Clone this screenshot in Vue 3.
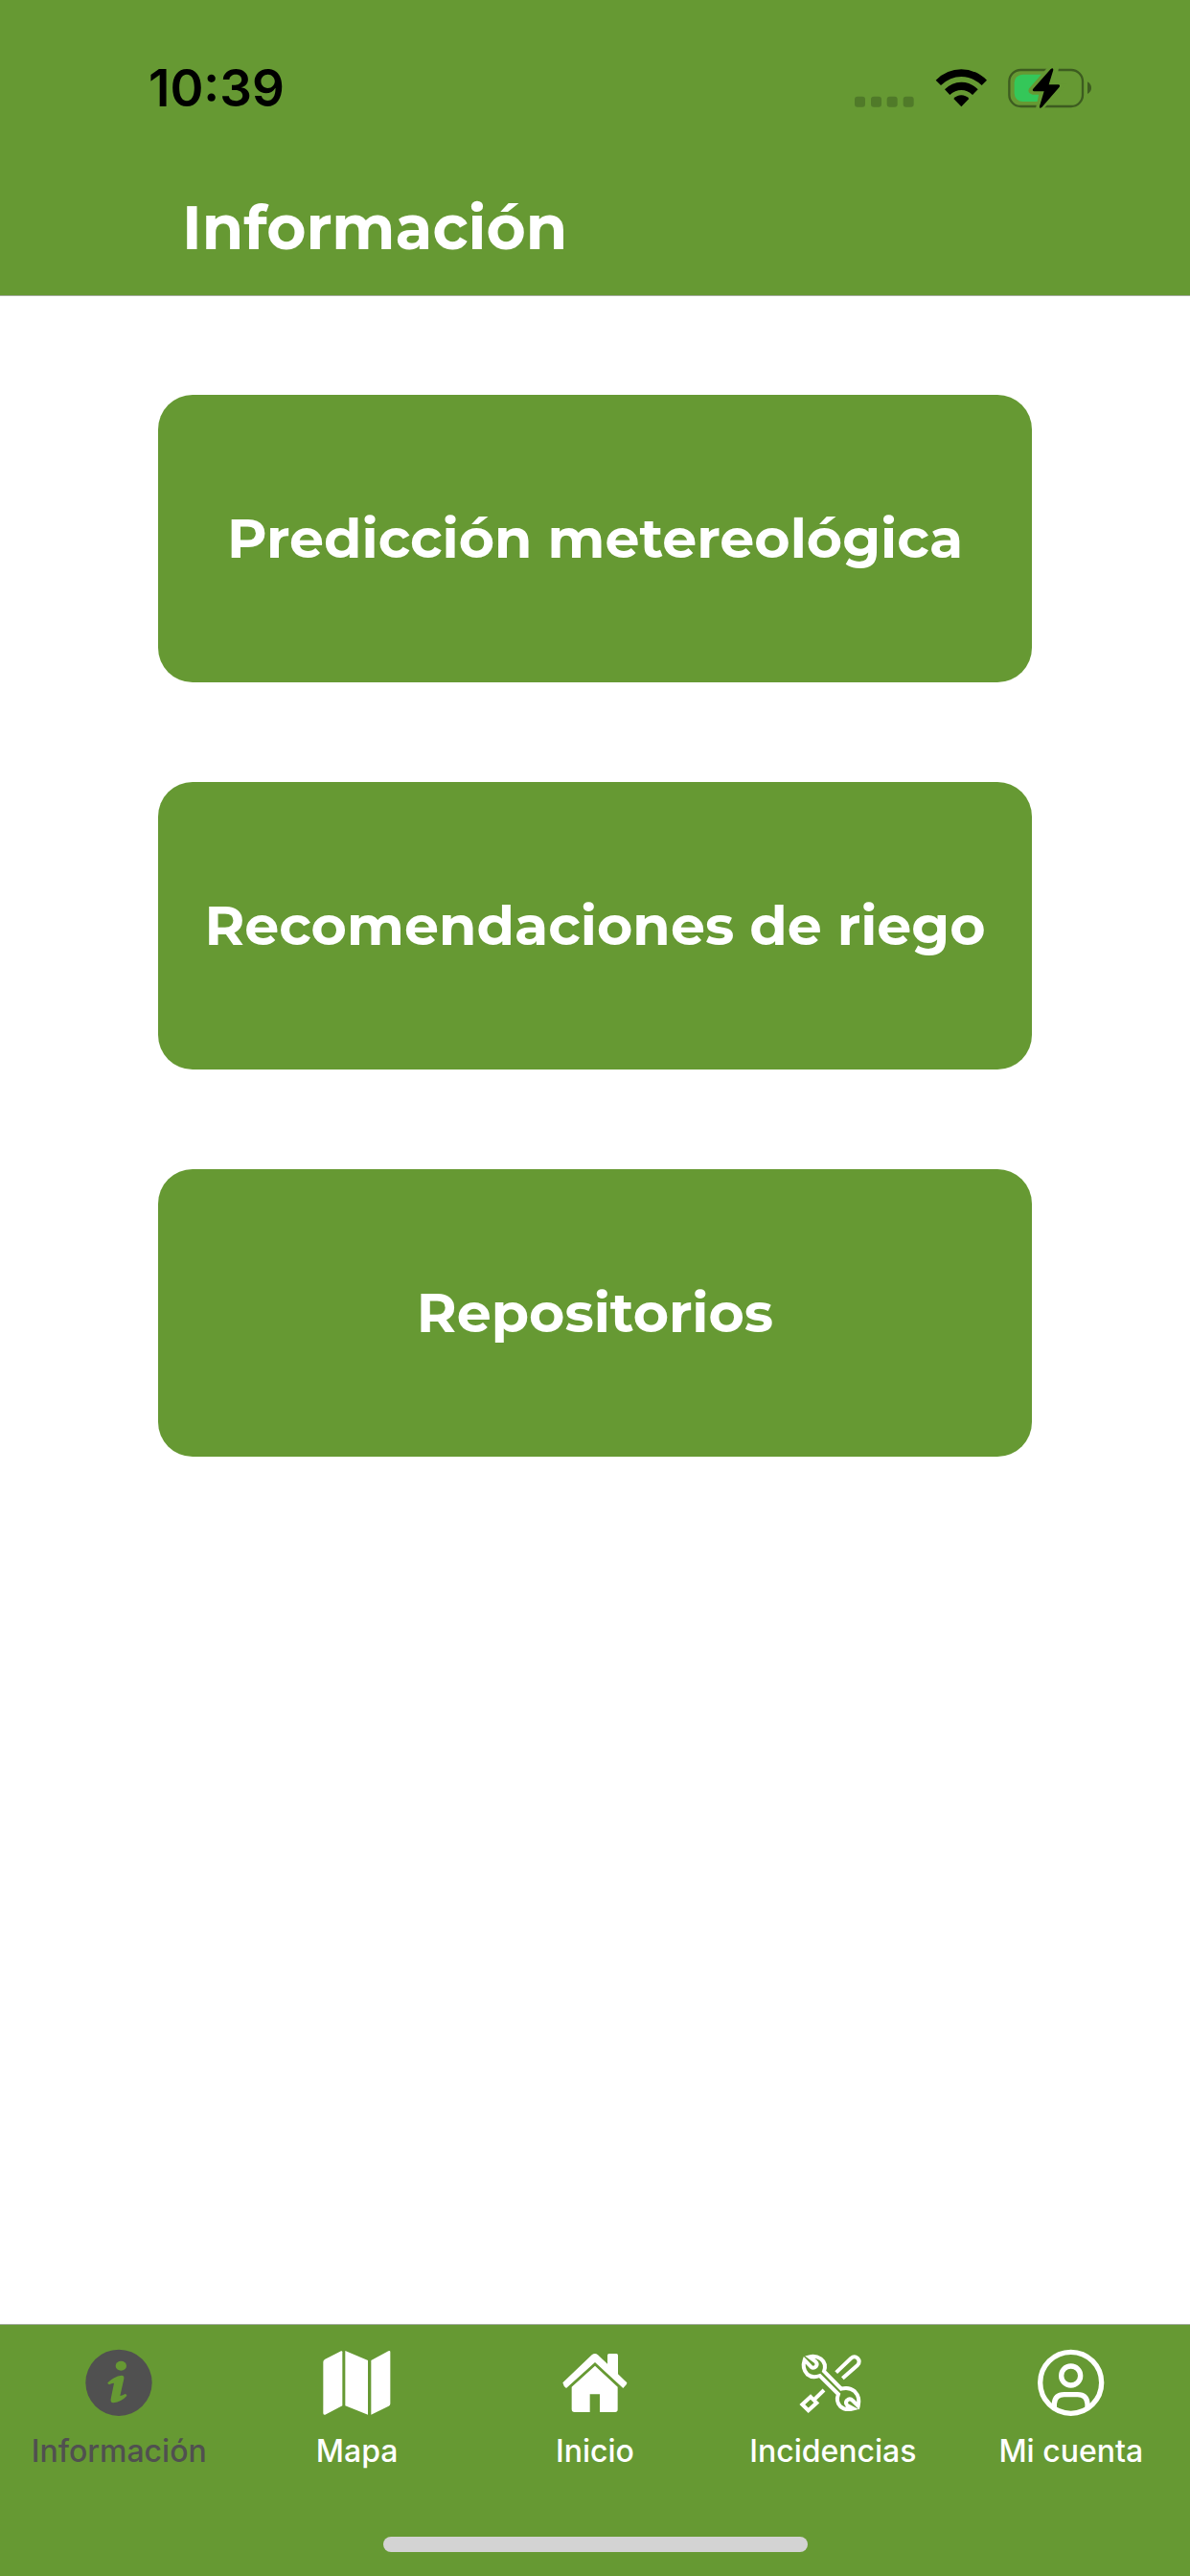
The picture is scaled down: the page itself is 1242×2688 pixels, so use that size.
<script setup>
import { ref } from 'vue'

const sections = ['Predicción metereológica', 'Recomendaciones de riego', 'Repositorios']
const tabs = [
  { id: 'info', label: 'Información' },
  { id: 'map', label: 'Mapa' },
  { id: 'home', label: 'Inicio' },
  { id: 'issues', label: 'Incidencias' },
  { id: 'account', label: 'Mi cuenta' },
]
const active = ref('info')
</script>

<template>
  <div class="screen">
    <header class="header">
      <div class="status">
        <time class="clock">10:39</time>
        <div class="indicators">
          <svg class="signal" viewBox="90 60 195 132" aria-hidden="true">
            <g fill="#507a29">
              <rect x="93" y="152" width="33" height="33" rx="9" />
              <rect x="144" y="152" width="33" height="33" rx="9" />
              <rect x="194" y="152" width="33" height="33" rx="9" />
              <rect x="245" y="152" width="33" height="33" rx="9" />
            </g>
          </svg>
          <svg class="wifi" viewBox="345 60 165 132" aria-hidden="true">
            <path d="M347 101Q382 67 427 67T507 101L491 117Q462 90 427 90T363 117Z" />
            <path d="M375 130Q397 107 427 107T479 130L462 147Q446 132 427 132T391 147Z" />
            <path d="M403 159Q413 148 427 148T451 159L427 184Z" />
          </svg>
          <svg class="battery" viewBox="573 60 267 132" aria-hidden="true">
            <rect x="580" y="69" width="230" height="114" rx="36" fill="none" stroke="#3d5c20" stroke-width="7" />
            <path d="M825 106Q837 113 837 125T825 144Z" fill="#3d5c20" />
            <rect x="596" y="83" width="110" height="85" rx="26" fill="#34c759" />
            <path d="M707 62L647 131Q644 138 654 140H680L669 190H680L746 119H719L729 62Z" fill="#669933" stroke="#669933" stroke-width="12" />
            <path d="M710 66Q718 60 718 69L704 115H735Q741 118 736 124L682 186Q673 192 675 182L689 136H657Q650 133 656 127Z" />
          </svg>
        </div>
      </div>
      <h1 class="title">Información</h1>
    </header>

    <main class="content">
      <button v-for="section in sections" :key="section" class="card" type="button">{{ section }}</button>
    </main>

    <footer class="footer">
      <nav class="tabs">
        <button
          v-for="tab in tabs"
          :key="tab.id"
          type="button"
          class="tab"
          :class="{ active: tab.id === active }"
          @click="active = tab.id"
        >
          <svg v-if="tab.id === 'info'" class="icon" viewBox="253 105 240 240" aria-hidden="true">
            <circle cx="373" cy="226" r="104" fill="currentColor" />
            <ellipse cx="380" cy="173" rx="17" ry="15" fill="#669933" />
            <path d="M338 226Q357 206 382 203Q391 203 389 214L377 267Q386 265 393 261Q399 262 398 267Q381 286 356 289Q346 289 348 277L358 227Q349 227 343 232Q338 231 338 226Z" fill="#669933" />
          </svg>
          <svg v-else-if="tab.id === 'map'" class="icon" viewBox="98 105 240 240" fill="currentColor" aria-hidden="true">
            <path d="M117 152L167 127Q171 126 171 130V298L117 326Q111 328 111 321V161Q111 155 117 152Z" />
            <path d="M180 126L251 156V326L180 298Z" />
            <path d="M261 156L315 127Q321 124 321 130V292Q321 297 316 299L261 326Z" />
          </svg>
          <svg v-else-if="tab.id === 'home'" class="icon" viewBox="123 105 240 240" fill="currentColor" aria-hidden="true">
            <path d="M142 226L233 139Q243 131 252 139L282 167V140Q282 135 287 135H310Q315 135 315 140V199L343 226Q343 229 341 232L331 243L243 162L153 243Q144 237 142 226Z" />
            <path d="M243 173L314 239V310Q314 318 306 318H258V262H227V318H179Q170 318 170 309V239Z" />
          </svg>
          <svg v-else-if="tab.id === 'issues'" class="icon" viewBox="178 105 240 240" fill="none" stroke="currentColor" stroke-width="12" aria-hidden="true">
            <path d="M210 155L230 176Q238 183 246 175Q252 167 245 160L225 145Q244 140 261 151Q280 166 271 190L325 245Q350 238 367 253Q385 271 378 299L361 282Q352 273 343 281Q336 289 344 297L363 307Q337 314 322 300Q307 284 316 262L258 204Q235 213 219 200Q201 181 210 155Z" />
            <path d="M309 194L355 150Q366 140 376 149Q386 160 376 171L329 212" />
            <path d="M271 249L239 280M203 294L229 270L248 289L222 313Z" />
          </svg>
          <svg v-else class="icon" viewBox="203 105 240 240" fill="none" stroke="currentColor" stroke-width="16" aria-hidden="true">
            <circle cx="322" cy="226" r="96" />
            <circle cx="322" cy="204" r="30" />
            <path d="M270 303V292Q272 263 301 263H343Q372 263 374 292V303" />
          </svg>
          <span>{{ tab.label }}</span>
        </button>
      </nav>
      <div class="home-indicator"></div>
    </footer>
  </div>
</template>

<style>
body {
  margin: 0;
}
</style>

<style scoped>
.screen {
  min-height: 100vh;
  display: flex;
  flex-direction: column;
  background: #fff;
  font-family: Inter, "Liberation Sans", sans-serif;
}
.header {
  padding: 60px 102px 32px 155px;
  background: #669933;
  border-bottom: 1px solid #a2ab9a;
}
.status {
  height: 64px;
  display: flex;
  align-items: center;
  justify-content: space-between;
}
.clock {
  font-size: 53px;
  line-height: 64px;
  font-weight: 600;
}
.indicators {
  display: flex;
  gap: 20px;
}
.indicators svg {
  height: 44px;
}
.signal {
  width: 65px;
}
.wifi {
  width: 55px;
}
.battery {
  width: 89px;
}
.title {
  margin: 76px 0 0 35px;
  color: #fff;
  font-family: Montserrat, Inter, sans-serif;
  font-size: 63px;
  line-height: 76px;
  font-weight: 700;
}
.content {
  flex: 1;
  display: flex;
  flex-direction: column;
  align-items: center;
  gap: 104px;
  padding: 103px 0;
}
.card {
  width: 73.5%;
  height: 300px;
  padding: 0;
  border: 0;
  border-radius: 36px;
  background: #669933;
  color: #fff;
  font-family: Montserrat, Inter, sans-serif;
  font-size: 57px;
  line-height: 72px;
  font-weight: 700;
}
.footer {
  padding: 20px 0 25px;
  display: flex;
  flex-direction: column;
  align-items: center;
  gap: 69px;
  background: #669933;
  border-top: 1px solid #a2ab9a;
}
.tabs {
  width: 100%;
  display: grid;
  grid-template-columns: repeat(5, 1fr);
}
.tab {
  padding: 0;
  border: 0;
  background: none;
  display: flex;
  flex-direction: column;
  align-items: center;
  gap: 12px;
  color: #fff;
  font-family: inherit;
  font-size: 32px;
  line-height: 40px;
  font-weight: 500;
  white-space: nowrap;
}
.tab.active {
  color: #505050;
}
.icon {
  width: 80px;
  height: 80px;
}
.home-indicator {
  width: 443px;
  height: 16px;
  border-radius: 8px;
  background: #d3d3d3;
}
</style>
